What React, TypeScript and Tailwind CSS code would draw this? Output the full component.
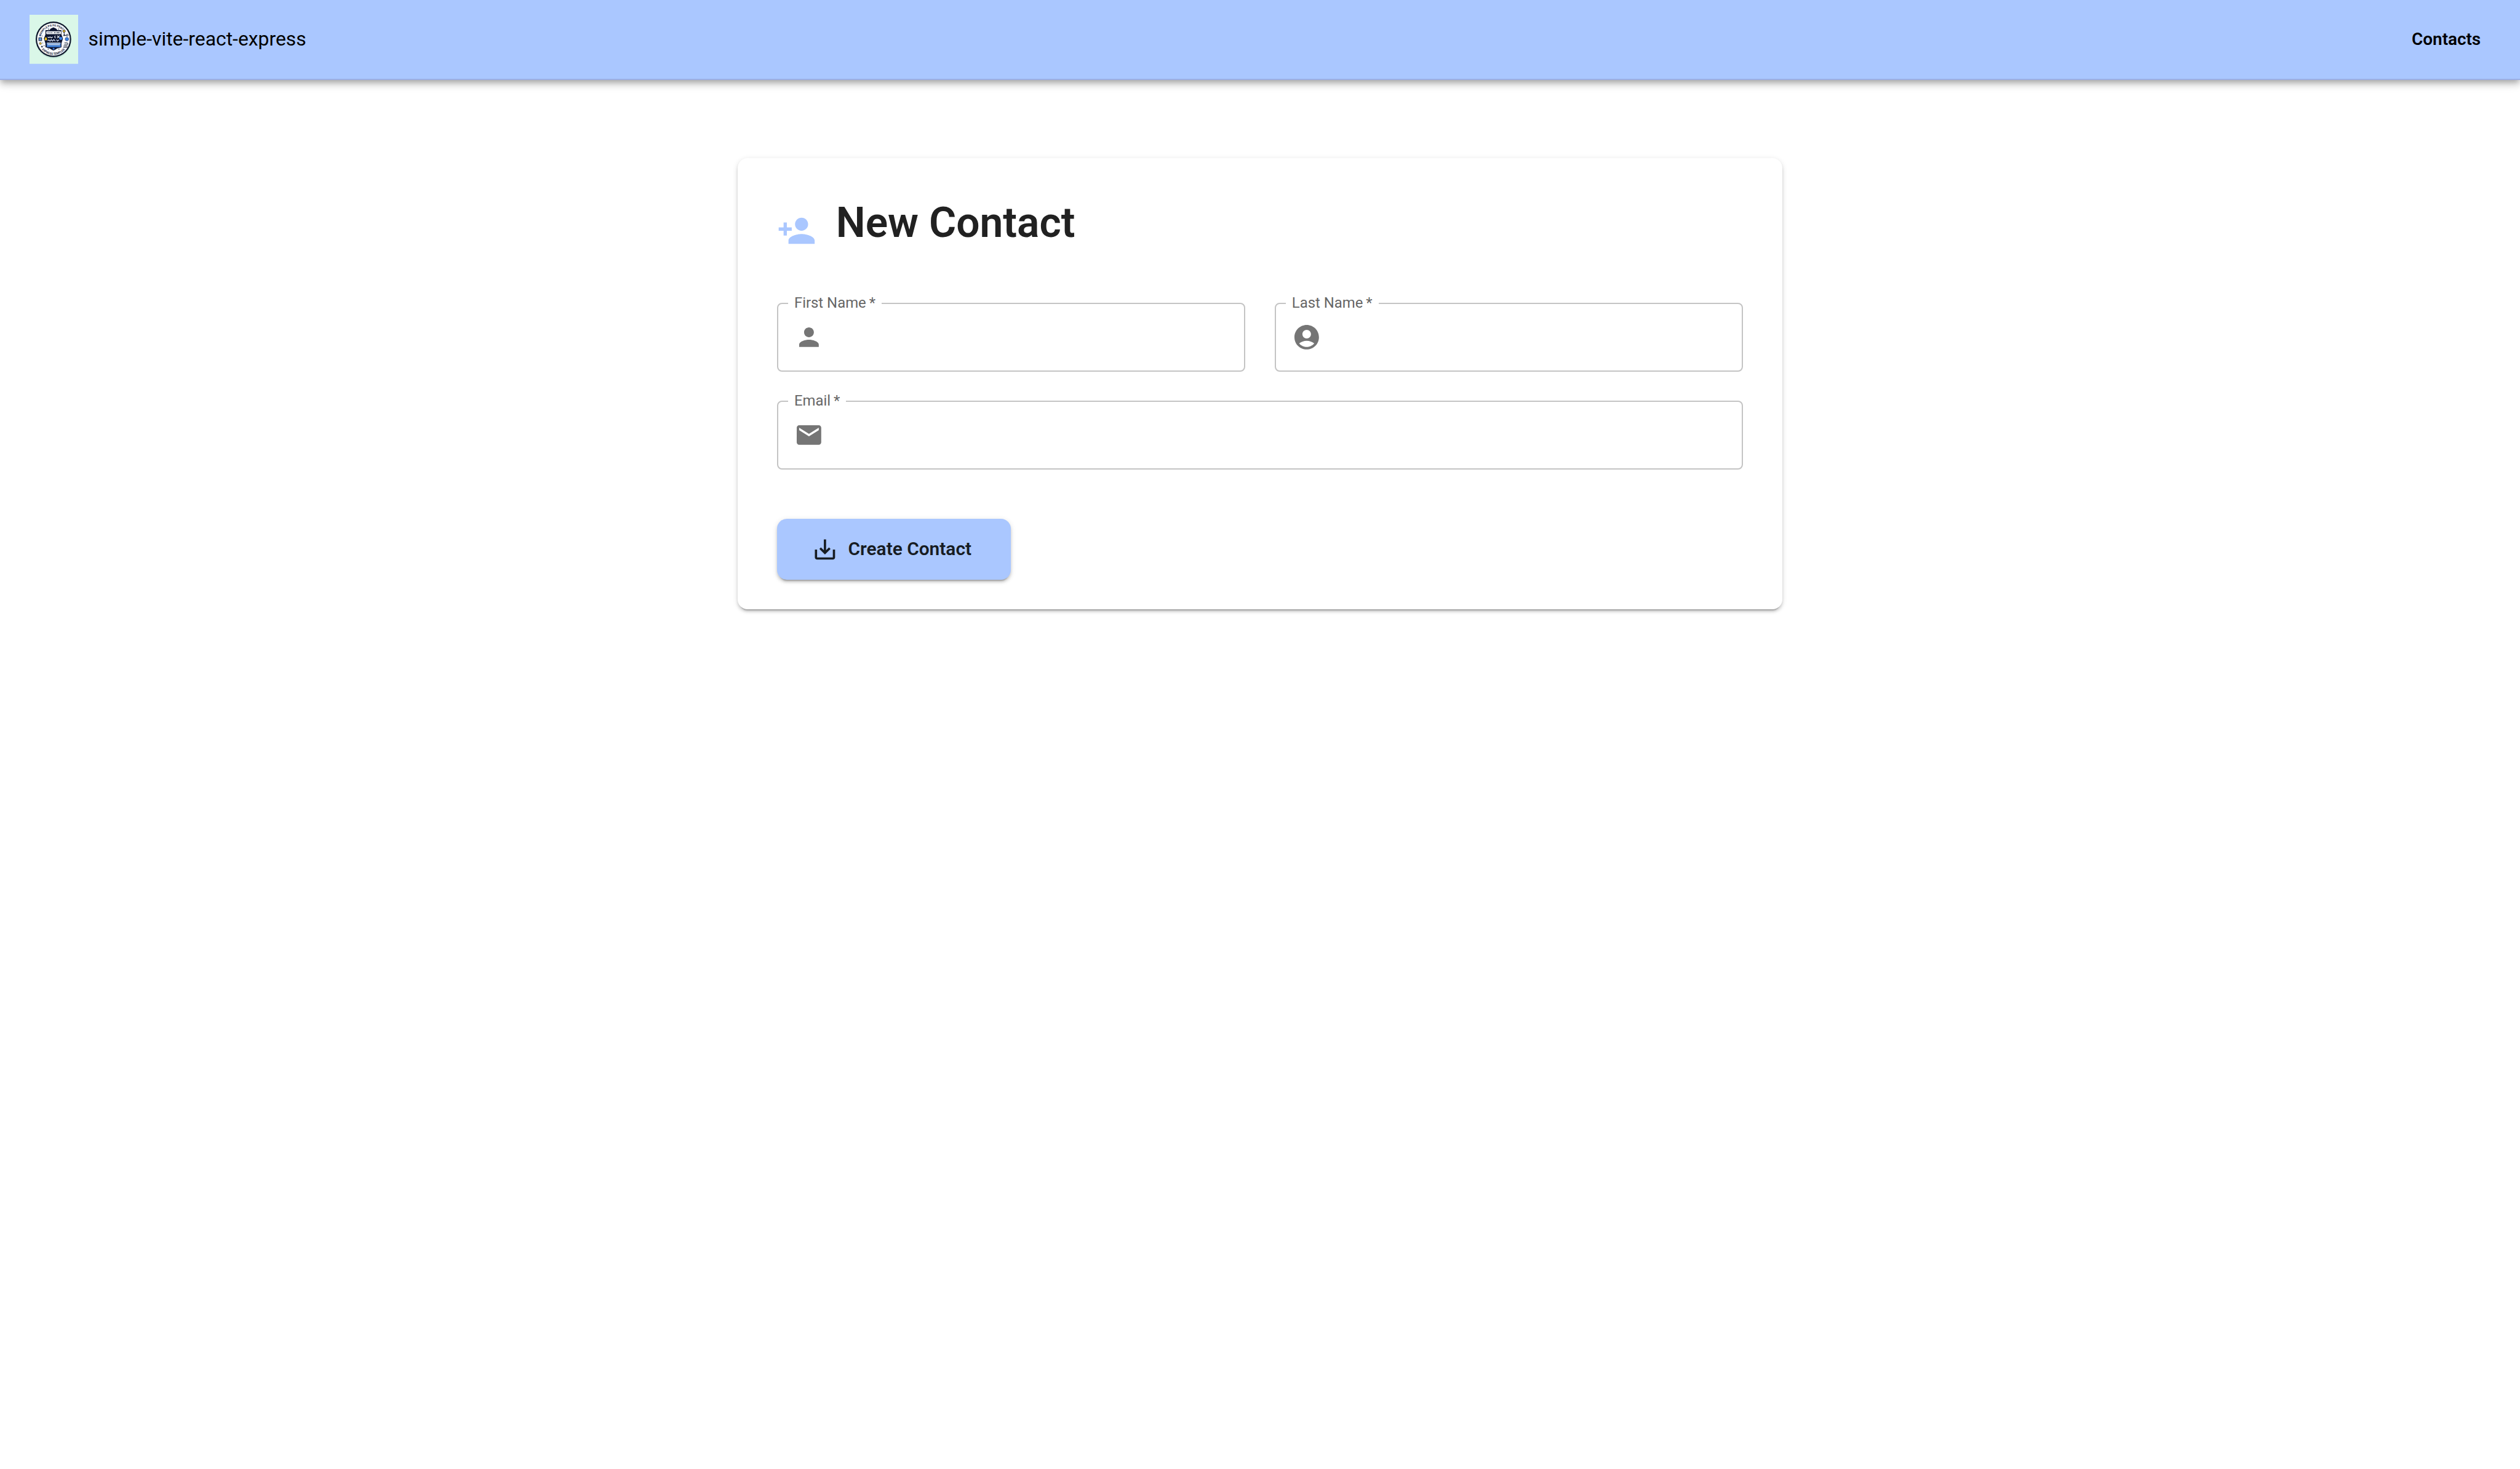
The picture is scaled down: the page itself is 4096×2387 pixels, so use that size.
import React from "react";

function Logo({ className }: { className: string }) {
  return (
    <svg viewBox="0 0 80 80" className={className} fontFamily="Roboto, sans-serif">
      <defs>
        <path id="arcTop" d="M17.8 40A21.2 21.2 0 0 1 60.2 40" />
        <path id="arcBottom" d="M14.2 40.5A24.8 24.8 0 0 0 63.8 40.5" />
      </defs>
      <rect width="80" height="80" fill="#daf7e8" />
      <circle cx="39" cy="42.5" r="28.6" fill="#c4e7d8" />
      <circle cx="39" cy="40" r="29" fill="#0d172b" />
      <circle cx="39" cy="40" r="26.8" fill="#f7f9fb" />
      <text fontSize="4.5" fontWeight="700" fill="#1b2438" textAnchor="middle">
        <textPath href="#arcTop" startOffset="44%">SIMPLE PG PG PEAC’</textPath>
      </text>
      <text fontSize="4.7" fontWeight="700" fill="#1b2438" textAnchor="middle">
        <textPath href="#arcBottom" startOffset="50%">EXPRESS TEMPLOS</textPath>
      </text>
      <path d="M39 20.5l4.5 2.2 2 2.3h6.5v7l2.5 7-2.5 8v6l-7 2-3.5 2.2-2.5 1-2.5-1L33 55l-7-2v-6l-2.5-8 2.5-7v-7h6.5l2-2.3z" fill="#0b1430" />
      <rect x="27.3" y="26.8" width="24" height="4.8" rx="1" fill="#f1f3f6" />
      <path d="M29.5 29.2h1.6M32.5 29.2h1.6M35.5 29.2h1.6M40 29.2h2.5M44 29.2h5" stroke="#26304a" strokeWidth="1.1" />
      <path d="M29.5 36.2l2 1.2 2-1.2 2 1.5 2.5-1.5M42.5 34.5c-2.2.3-2 3 .3 3.2M45 34l4 4M49 34l-4 4" stroke="#e8edf5" strokeWidth="1.3" fill="none" />
      <path d="M29.5 42.5l2-1.5 2 2 2-2.5 2 2.5 2-2.5 2.5 2.5M44 40.5l1.5 2.5 2.5-2" stroke="#cfd9ee" strokeWidth="1.3" fill="none" />
      <rect x="27.7" y="45.5" width="23.6" height="7.7" rx="1" fill="#3f7fd8" stroke="#0b1430" strokeWidth=".8" />
      <path d="M28.5 46.2h22M29.5 48.8h20" stroke="#d5dbe3" strokeWidth="1.5" />
      <circle cx="39.3" cy="55.4" r="1.5" fill="#3a78e0" />
      <path d="M26.7 35.8c1 1.9 2 2.9 2 4.2a2 2 0 0 1-4 0c0-1.3 1-2.3 2-4.2z" fill="#f5c51e" />
      <circle cx="51" cy="38.7" r="2.5" fill="#3d84e6" />
      <path d="M56.3 26.7l.3 6.5 3.8 1M56.5 33l-1.5 1.5" stroke="#1b2438" strokeWidth="1" fill="none" />
      <circle cx="56.3" cy="26.7" r="2" fill="#f2c422" stroke="#1b2438" strokeWidth=".9" />
      <circle cx="61.5" cy="33.3" r="1.5" fill="#f7f9fb" stroke="#1b2438" strokeWidth="1" />
      <circle cx="56.7" cy="33.3" r="1.3" fill="#1b2438" />
      <circle cx="61" cy="39.7" r="2.8" fill="#3d84e6" stroke="#26406e" strokeWidth=".8" />
      <rect x="15.2" y="37.5" width="4.6" height="4.6" fill="#5b9bea" stroke="#1b2438" strokeWidth="1" />
      <circle cx="17.4" cy="33.6" r="1.5" fill="#35507e" />
      <circle cx="17.7" cy="46.8" r="1.7" fill="#f2c422" stroke="#4b4a3c" strokeWidth=".8" />
      <circle cx="20.3" cy="52" r="1.4" fill="#26304a" />
      <circle cx="20.5" cy="34.5" r=".6" fill="#1b2438" />
      <circle cx="21.5" cy="46" r=".6" fill="#1b2438" />
      <circle cx="23.8" cy="50.5" r=".7" fill="#1b2438" />
      <circle cx="31" cy="23.5" r=".8" fill="#1b2438" />
      <circle cx="47.5" cy="23.3" r=".8" fill="#1b2438" />
      <circle cx="30.5" cy="56" r=".8" fill="#1b2438" />
      <circle cx="48" cy="56" r=".8" fill="#1b2438" />
      <path d="M57.5 46h3.5a1.3 1.3 0 0 1 0 2.8h-4M56 50.8h5.5M55.5 53h6" stroke="#5a616e" strokeWidth="1.4" strokeLinecap="round" fill="none" />
    </svg>
  );
}

function Icon({ path, className }: { path: string; className: string }) {
  return (
    <svg viewBox="0 0 24 24" fill="currentColor" className={className}>
      <path d={path} />
    </svg>
  );
}

const personAdd =
  "M15 12c2.21 0 4-1.79 4-4s-1.79-4-4-4-4 1.79-4 4 1.79 4 4 4zm-9-2V7H4v3H1v2h3v3h2v-3h3v-2H6zm9 4c-2.67 0-8 1.34-8 4v2h16v-2c0-2.66-5.33-4-8-4z";
const person =
  "M12 12c2.21 0 4-1.79 4-4s-1.79-4-4-4-4 1.79-4 4 1.79 4 4 4zm0 2c-2.67 0-8 1.34-8 4v2h16v-2c0-2.66-5.33-4-8-4z";
const accountCircle =
  "M12 2C6.48 2 2 6.48 2 12s4.48 10 10 10 10-4.48 10-10S17.52 2 12 2zm0 4c1.93 0 3.5 1.57 3.5 3.5S13.93 13 12 13s-3.5-1.57-3.5-3.5S10.07 6 12 6zm0 14c-2.03 0-4.43-.82-6.14-2.88C7.55 15.8 9.68 15 12 15s4.45.8 6.14 2.12C16.43 19.18 14.03 20 12 20z";
const email =
  "M20 4H4c-1.1 0-1.99.9-1.99 2L2 18c0 1.1.9 2 2 2h16c1.1 0 2-.9 2-2V6c0-1.1-.9-2-2-2zm0 4l-8 5-8-5V6l8 5 8-5v2z";
const saveAlt =
  "M19 12v7H5v-7H3v7c0 1.1.9 2 2 2h14c1.1 0 2-.9 2-2v-7h-2zm-6 .67l2.59-2.58L17 11.5l-5 5-5-5 1.41-1.41L11 12.67V3h2v9.67z";

function Field({ label, icon, className = "" }: { label: string; icon: string; className?: string }) {
  return (
    <div className={`relative flex h-[111.6px] items-center rounded-[8px] border-2 border-[#c4c4c4] pl-[25.9px] text-[#757575] ${className}`}>
      <label className="absolute left-[15.9px] top-[-14px] bg-white px-[10px] text-[23.9px] leading-[24px] font-[430] whitespace-nowrap text-[#666666]">
        {label}
        {"\u2009*"}
      </label>
      <Icon path={icon} className="size-[47.8px]" />
    </div>
  );
}

export default function App() {
  return (
    <div className="h-[2387px] w-[4096px] overflow-hidden bg-white font-['Roboto',sans-serif]">
      <header className="flex h-[129.5px] items-center border-b-2 border-[#9bafe5] bg-[#aac7ff] pl-[47.8px] pr-[63.8px] text-black shadow-[0_4px_8px_-2px_rgba(0,0,0,0.2),0_8px_10px_0_rgba(0,0,0,0.14),0_2px_20px_0_rgba(0,0,0,0.12)]">
        <Logo className="size-[79.7px]" />
        <span className="ml-4 text-[31.87px] font-[430]">simple-vite-react-express</span>
        <span className="ml-auto text-[27.89px] font-[570]">Contacts</span>
      </header>

      <main className="mx-auto mt-[127.5px] h-[733.2px] w-[1697.3px] rounded-[16px] bg-white px-[63.7px] pt-[62.7px] shadow-[0_6px_2px_-4px_rgba(0,0,0,0.2),0_4px_4px_0_rgba(0,0,0,0.14),0_2px_10px_0_rgba(0,0,0,0.12)]">
        <div className="flex h-[172.3px] items-start">
          <Icon path={personAdd} className="mt-[22.9px] size-[63.8px] text-[#aac7ff]" />
          <h1 className="ml-[31.9px] text-[67.73px] leading-[84px] font-[585] text-[#212121]">New Contact</h1>
        </div>
        <form className="grid grid-cols-2 gap-[47.8px]">
          <Field label="First Name" icon={person} />
          <Field label="Last Name" icon={accountCircle} />
          <Field label="Email" icon={email} className="col-span-2" />
        </form>
        <button className="mt-[79.7px] flex h-[99.6px] w-[379.5px] items-center rounded-[16px] bg-[#aac7ff] pl-[55.8px] text-[29.88px] font-[560] text-[#171c22] shadow-[0_6px_2px_-4px_rgba(0,0,0,0.2),0_4px_4px_0_rgba(0,0,0,0.14),0_2px_10px_0_rgba(0,0,0,0.12)]">
          <Icon path={saveAlt} className="size-[43.8px]" />
          <span className="ml-[15.9px] whitespace-nowrap">Create Contact</span>
        </button>
      </main>
    </div>
  );
}
